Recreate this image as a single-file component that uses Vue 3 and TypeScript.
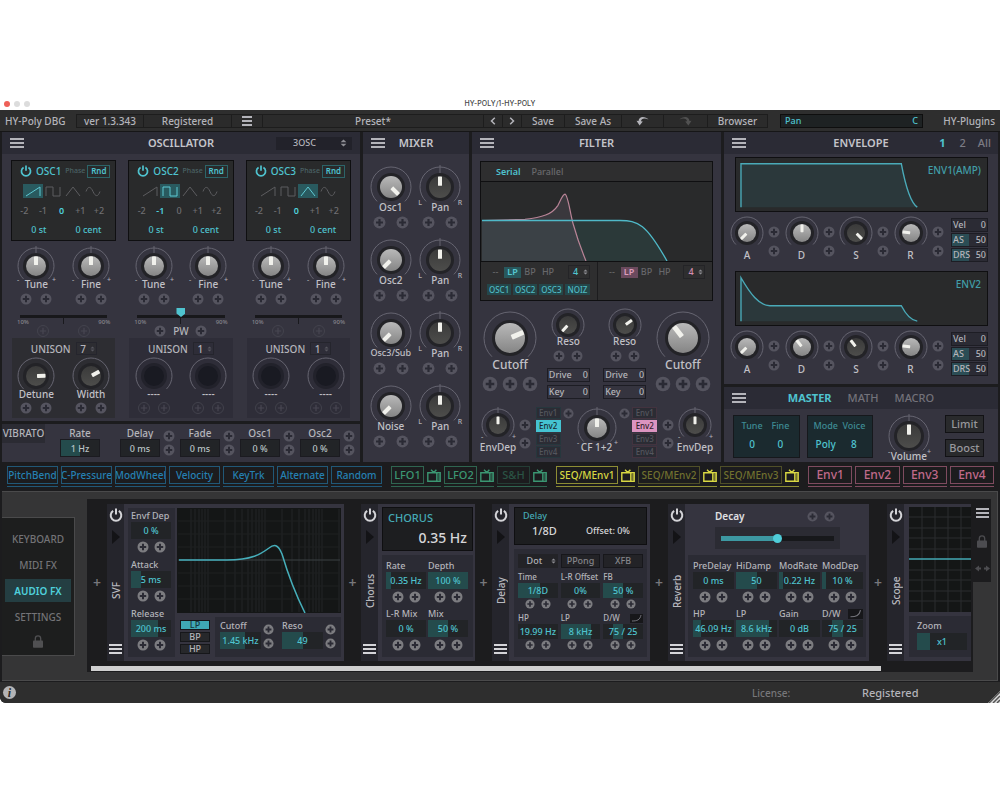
<script setup lang="ts">
import { h, ref } from 'vue'

interface KnobProps {
  radius: number
  body: number
  angle?: number
  label?: string
  dark?: boolean
  off?: boolean
  tick?: boolean
  marks?: string
  low?: boolean
  size?: string
  name?: string
}

const polar = (r: number, deg: number) => {
  const a = (deg * Math.PI) / 180
  return `${(Math.sin(a) * r).toFixed(2)} ${(-Math.cos(a) * r).toFixed(2)}`
}

const Knob = (p: KnobProps) => {
  const s = p.radius + 2
  const b = p.body
  const kids = [
    h('path', { d: `M${polar(p.radius, -136)}A${p.radius} ${p.radius} 0 1 1 ${polar(p.radius, 136)}`, fill: 'none', stroke: '#666571', 'stroke-width': 1 }),
  ]
  if (p.tick) kids.push(h('path', { d: `M0 ${-s}V${-b - 2}`, stroke: '#666571' }))
  kids.push(h('circle', { r: b + 3, fill: p.off ? '#22222b' : '#232327' }))
  if (!p.off) {
    const w = b > 13 ? 5 : b > 9 ? 4 : 3
    kids.push(h('circle', { r: b, fill: p.dark ? 'url(#cap-dark)' : 'url(#cap-light)' }))
    kids.push(h('rect', { x: -w / 2, y: -b + 0.5, width: w, height: b * 0.85, rx: 0.6, fill: '#f1f1ec', transform: `rotate(${p.angle ?? 0})` }))
  } else {
    kids.push(h('circle', { r: b, fill: '#191a22' }))
  }
  if (p.marks) {
    kids.push(h('text', { x: -p.radius, y: p.radius - 2, class: 'mark' }, p.marks[0]))
    kids.push(h('text', { x: p.radius, y: p.radius - 2, class: 'mark' }, p.marks[1]))
  }
  return h('label', { class: ['knob', p.size, { low: p.low }] }, [
    h('svg', { width: s * 2, height: s * 2, viewBox: `${-s} ${-s} ${s * 2} ${s * 2}` }, kids),
    h('input', { type: 'range', min: -136, max: 136, value: p.angle ?? 0, disabled: p.off, 'aria-label': p.label || p.name }),
    p.label ? h('span', p.label) : null,
  ])
}

const Plus = (p: { size?: number; ghost?: boolean }) =>
  h('button', { class: ['plus', { ghost: p.ghost }], type: 'button', 'aria-label': 'Add modulation' }, [
    h('svg', { width: p.size ?? 12, height: p.size ?? 12, viewBox: '0 0 12 12' }, [
      h('circle', { cx: 6, cy: 6, r: 5.5, class: 'disc' }),
      h('path', { d: 'M6 2.8V9.2M2.8 6H9.2', class: 'cross' }),
    ]),
  ])

const Burger = (p: { size?: number }) =>
  h('button', { class: 'burger', type: 'button', 'aria-label': 'Menu' }, [
    h('svg', { width: p.size ?? 14, height: 10, viewBox: '0 0 14 10', preserveAspectRatio: 'none' }, [
      h('path', { d: 'M0 1H14M0 5H14M0 9H14', stroke: 'currentColor', 'stroke-width': 1.8 }),
    ]),
  ])

const Power = (p: { size: number }) =>
  h('button', { class: 'power', type: 'button', 'aria-label': 'Power' }, [
    h('svg', { width: p.size, height: p.size, viewBox: '0 0 14 14' }, [
      h('path', { d: 'M4.2 2.9A5.3 5.3 0 1 0 9.8 2.9M7 0.6V6.6', fill: 'none', stroke: 'currentColor', 'stroke-width': 2 }),
    ]),
  ])

const Steps = () =>
  h('svg', { class: 'steps', width: 7, height: 8, viewBox: '0 0 7 8', 'aria-hidden': 'true' }, [
    h('path', { d: 'M0.6 3.2L3.5 0.4L6.4 3.2ZM0.6 4.8L3.5 7.6L6.4 4.8Z', fill: 'currentColor' }),
  ])

const Lock = () =>
  h('svg', { class: 'lock', width: 10, height: 13, viewBox: '0 0 10 13', 'aria-hidden': 'true' }, [
    h('path', { d: 'M2.3 6V3.6A2.7 2.7 0 0 1 7.7 3.6V6', fill: 'none', stroke: 'currentColor', 'stroke-width': 1.3 }),
    h('rect', { x: 0, y: 5.5, width: 10, height: 7.2, rx: 0.8, fill: 'currentColor' }),
  ])

const Tv = () =>
  h('button', { class: 'tv', type: 'button', 'aria-label': 'Show monitor' }, [
    h('svg', { width: 14, height: 13, viewBox: '0 0 14 13' }, [
      h('path', { d: 'M0.8 3.8H13.2V12.2H0.8ZM9.8 4V12M4 0.8L6.8 3.6L9.4 0.8', fill: 'none', stroke: 'currentColor', 'stroke-width': 1.4 }),
      h('path', { d: 'M10.6 6H13M10.6 8H13M10.6 10H13', stroke: 'currentColor', 'stroke-width': 0.9 }),
    ]),
  ])

const fill = (from: number, to: number) => ({ '--from': `${from}%`, '--to': `${to}%` })

const waves = [
  { name: 'Saw', d: 'M1 10L15 1V10' },
  { name: 'Square', d: 'M1 10V1H8V10H15V1' },
  { name: 'Triangle', d: 'M1 10L8 1L15 10' },
  { name: 'Sine', d: 'M1 5.5C3 0 5.5 0 8 5.5S13 11 15 5.5' },
]
const octaves = ['-2', '-1', '0', '+1', '+2']

const oscs = ref([
  { name: 'OSC1', wave: 0, octave: 2, pw: false, unison: '7', wide: true },
  { name: 'OSC2', wave: 1, octave: 1, pw: true, unison: '1', wide: false },
  { name: 'OSC3', wave: 2, octave: 2, pw: false, unison: '1', wide: false },
])

const vibrato = [
  { label: 'Rate', value: '1 Hz', to: 50, mod: false },
  { label: 'Delay', value: '0 ms', to: 0, mod: true },
  { label: 'Fade', value: '0 ms', to: 0, mod: true },
  { label: 'Osc1', value: '0 %', to: 0, mod: true },
  { label: 'Osc2', value: '0 %', to: 0, mod: true },
]

const mixer = [
  { label: 'Osc1', angle: 135, size: '' },
  { label: 'Osc2', angle: -135, size: '' },
  { label: 'Osc3/Sub', angle: -135, size: 'small' },
  { label: 'Noise', angle: -135, size: '' },
]

const envs = [
  {
    name: 'ENV1(AMP)',
    line: 'M5 51V6H166C170 28 175 46 182 51',
    knobs: [['A', -135], ['D', 0], ['S', 135], ['R', -82]] as [string, number][],
  },
  {
    name: 'ENV2',
    line: 'M5 51V6C14 22 23 35 34 35H166C170 43 175 50 182 51',
    knobs: [['A', -135], ['D', -38], ['S', -38], ['R', -82]] as [string, number][],
  },
]
const envValues = [
  { label: 'Vel', value: '0', to: 0 },
  { label: 'AS', value: '50', to: 50 },
  { label: 'DRS', value: '50', to: 50 },
]
const envSlots = ['Env1', 'Env2', 'Env3', 'Env4']
const envPick = ref('Env2')

const sources = [
  { kind: 'midi', items: ['PitchBend', 'C-Pressure', 'ModWheel', 'Velocity', 'KeyTrk', 'Alternate', 'Random'], dim: [] as string[], tv: false },
  { kind: 'lfo', items: ['LFO1', 'LFO2', 'S&H'], dim: ['S&H'], tv: true },
  { kind: 'seq', items: ['SEQ/MEnv1', 'SEQ/MEnv2', 'SEQ/MEnv3'], dim: ['SEQ/MEnv2', 'SEQ/MEnv3'], tv: true },
  { kind: 'env', items: ['Env1', 'Env2', 'Env3', 'Env4'], dim: [] as string[], tv: false },
]

const pages = ['KEYBOARD', 'MIDI FX', 'AUDIO FX', 'SETTINGS']
const page = ref('AUDIO FX')

interface Param { label: string; value: string; from?: number; to: number; curve?: boolean }
const svf: Param[] = [
  { label: 'Envf Dep', value: '0 %', to: 0 },
  { label: 'Attack', value: '5 ms', to: 24 },
  { label: 'Release', value: '200 ms', to: 68 },
]
const svfTone: Param[] = [
  { label: 'Cutoff', value: '1.45 kHz', to: 60 },
  { label: 'Reso', value: '49', to: 50 },
]
const chorus: Param[] = [
  { label: 'Rate', value: '0.35 Hz', to: 12 },
  { label: 'Depth', value: '100 %', to: 100 },
  { label: 'L-R Mix', value: '0 %', to: 0 },
  { label: 'Mix', value: '50 %', to: 50 },
]
const delay: Param[] = [
  { label: 'Time', value: '1/8D', to: 55 },
  { label: 'L-R Offset', value: '0%', to: 0 },
  { label: 'FB', value: '50 %', to: 50 },
  { label: 'HP', value: '19.99 Hz', to: 0 },
  { label: 'LP', value: '8 kHz', to: 76 },
  { label: 'D/W', value: '75 / 25', from: 25, to: 50, curve: true },
]
const reverb: Param[] = [
  { label: 'PreDelay', value: '0 ms', to: 0 },
  { label: 'HiDamp', value: '50', to: 50 },
  { label: 'ModRate', value: '0.22 Hz', to: 10 },
  { label: 'ModDep', value: '10 %', to: 10 },
  { label: 'HP', value: '46.09 Hz', to: 20 },
  { label: 'LP', value: '8.6 kHz', to: 80 },
  { label: 'Gain', value: '0 dB', to: 0 },
  { label: 'D/W', value: '75 / 25', from: 25, to: 50, curve: true },
]

const logLines: number[] = []
for (const start of [-26, 31, 88, 145]) {
  for (let i = 1; i < 10; i++) {
    const x = Math.round(start + 57 * Math.log10(i))
    if (x > 12 && x < 163) logLines.push(x)
  }
}
</script>

<template>
  <main class="window">
    <svg class="defs" width="0" height="0" aria-hidden="true">
      <defs>
        <linearGradient id="cap-light" x1="0" y1="0" x2="0" y2="1">
          <stop offset="0" stop-color="#b9b9b9" />
          <stop offset="1" stop-color="#858585" />
        </linearGradient>
        <linearGradient id="cap-dark" x1="0" y1="0" x2="0" y2="1">
          <stop offset="0" stop-color="#3a3a3a" />
          <stop offset="1" stop-color="#4d4d4b" />
        </linearGradient>
      </defs>
    </svg>

    <header class="titlebar">
      <div class="lights"><i class="close"></i><i></i><i></i></div>
      <h1>HY-POLY/1-HY-POLY</h1>
      <span></span>
    </header>

    <div class="app">
      <nav class="topbar">
        <strong class="brand">HY-Poly DBG</strong>
        <button type="button">ver 1.3.343</button>
        <button type="button">Registered</button>
        <Burger :size="10" />
        <button type="button">Preset*</button>
        <button type="button" aria-label="Previous preset"><svg width="6" height="8" viewBox="0 0 6 8"><path d="M4.8 0.8L1.5 4L4.8 7.2" fill="none" stroke="currentColor" stroke-width="1.5" /></svg></button>
        <button type="button" aria-label="Next preset"><svg width="6" height="8" viewBox="0 0 6 8"><path d="M1.2 0.8L4.5 4L1.2 7.2" fill="none" stroke="currentColor" stroke-width="1.5" /></svg></button>
        <button type="button">Save</button>
        <button type="button">Save As</button>
        <button type="button" aria-label="Undo"><svg width="13" height="10" viewBox="0 0 13 10"><path d="M12.5 3.5C10 0.5 3 -1 2.5 5L0.5 4.8L3.6 9.6L6.8 5.5L5 5.3C5 2.5 8.5 1.5 12.5 3.5Z" fill="currentColor" /></svg></button>
        <button type="button" class="faded" aria-label="Redo"><svg width="13" height="10" viewBox="0 0 13 10"><path d="M0.5 3.5C3 0.5 10 -1 10.5 5L12.5 4.8L9.4 9.6L6.2 5.5L8 5.3C8 2.5 4.5 1.5 0.5 3.5Z" fill="currentColor" /></svg></button>
        <button type="button">Browser</button>
        <span></span>
        <output class="readout"><span>Pan</span><span>C</span></output>
        <strong class="vendor">HY-Plugins</strong>
      </nav>

      <div class="synth">
        <div class="stack">
          <section class="panel">
            <header class="head">
              <Burger />
              <h2>OSCILLATOR</h2>
              <label class="sel mode"><select aria-label="Oscillator mode"><option>3OSC</option></select><Steps /></label>
            </header>
            <div class="oscs">
              <article v-for="o in oscs" :key="o.name" class="osc">
                <div class="screen osc-screen">
                  <div class="osc-top">
                    <Power :size="12" />
                    <b>{{ o.name }}</b>
                    <small>Phase</small>
                    <button type="button" class="rnd">Rnd</button>
                  </div>
                  <div class="waves">
                    <button v-for="(w, i) in waves" :key="w.name" type="button" :class="{ on: i === o.wave }" :aria-label="w.name" @click="o.wave = i">
                      <svg width="16" height="11" viewBox="0 0 16 11"><path :d="w.d" fill="none" stroke="currentColor" /></svg>
                    </button>
                  </div>
                  <div class="octaves">
                    <button v-for="(n, i) in octaves" :key="n" type="button" :class="{ on: i === o.octave }" @click="o.octave = i">{{ n }}</button>
                  </div>
                  <div class="tuning"><span>0 st</span><span>0 cent</span></div>
                </div>
                <div class="pair tunes">
                  <div v-for="n in ['Tune', 'Fine']" :key="n" class="cell">
                    <Knob :radius="18" :body="10" :label="n" :tick="true" marks="-+" />
                    <div class="mods"><Plus /><Plus /></div>
                  </div>
                </div>
                <div class="width" :class="{ live: o.pw }">
                  <input type="range" min="10" max="90" value="50" :disabled="!o.pw" :aria-label="o.name + ' pulse width'" />
                  <div class="scale"><span>10%</span><i></i><span>90%</span></div>
                  <div class="pw"><Plus :ghost="!o.pw" /><span>{{ o.pw ? 'PW' : '' }}</span><Plus :ghost="!o.pw" /></div>
                </div>
                <div class="unison" :class="{ live: o.wide }">
                  <label class="sel count"><span>UNISON</span><select><option>{{ o.unison }}</option></select><Steps /></label>
                  <div class="pair">
                    <div class="cell">
                      <Knob :radius="18" :body="10" :angle="88" :dark="true" :off="!o.wide" :label="o.wide ? 'Detune' : '----'" />
                      <div class="mods"><Plus :ghost="!o.wide" /><Plus :ghost="!o.wide" /></div>
                    </div>
                    <div class="cell">
                      <Knob :radius="18" :body="10" :angle="62" :dark="true" :off="!o.wide" :label="o.wide ? 'Width' : '----'" />
                      <div class="mods"><Plus :ghost="!o.wide" /><Plus :ghost="!o.wide" /></div>
                    </div>
                  </div>
                </div>
              </article>
            </div>
          </section>

          <section class="panel vibrato">
            <h2>VIBRATO</h2>
            <div v-for="v in vibrato" :key="v.label" class="vib">
              <label><span>{{ v.label }}</span><input class="val boxed" type="text" :value="v.value" :style="fill(0, v.to)" /></label>
              <div v-if="v.mod" class="mods tall"><Plus /><Plus /></div>
            </div>
          </section>
        </div>

        <section class="panel">
          <header class="head"><Burger /><h2>MIXER</h2></header>
          <div class="mixer">
            <template v-for="m in mixer" :key="m.label">
              <div class="cell">
                <Knob :radius="20" :body="11" :angle="m.angle" :label="m.label" :size="m.size" />
                <div class="mods"><Plus :size="13" /><Plus :size="13" /></div>
              </div>
              <div class="cell">
                <Knob :radius="20" :body="11" :dark="true" label="Pan" :tick="true" marks="LR" />
                <div class="mods"><Plus :size="13" /><Plus :size="13" /></div>
              </div>
            </template>
          </div>
        </section>

        <section class="panel">
          <header class="head"><Burger /><h2>FILTER</h2></header>
          <div class="filter">
            <div class="screen filter-screen">
              <div class="routing"><button type="button" class="on">Serial</button><button type="button">Parallel</button></div>
              <svg class="curve" viewBox="0 0 231 78" preserveAspectRatio="none" aria-hidden="true">
                <path d="M1 38H139C157 38 165 41 186 78H1Z" fill="#2b3939" />
                <path d="M1 38L44 37C61 35 71 32 77 23C81 15 82 12 84 12C87 13 89 30 92 41C96 55 100 66 105 78H1Z" fill="#584f5b" fill-opacity=".38" />
                <path d="M1 38L44 37C61 35 71 32 77 23C81 15 82 12 84 12C87 13 89 30 92 41C96 55 100 66 105 78" fill="none" stroke="#b98497" stroke-width="1.2" />
                <path d="M1 38H139C157 38 165 41 186 78" fill="none" stroke="#4fb9c8" stroke-width="1.3" />
              </svg>
              <div class="types">
                <div>
                  <div class="type"><button type="button">--</button><button type="button" class="on">LP</button><button type="button">BP</button><button type="button">HP</button><label class="sel poles"><select aria-label="Filter 1 poles"><option>4</option></select><Steps /></label></div>
                  <div class="route"><button v-for="r in ['OSC1', 'OSC2', 'OSC3', 'NOIZ']" :key="r" type="button">{{ r }}</button></div>
                </div>
                <div class="rose">
                  <div class="type"><button type="button">--</button><button type="button" class="on">LP</button><button type="button">BP</button><button type="button">HP</button><label class="sel poles"><select aria-label="Filter 2 poles"><option>4</option></select><Steps /></label></div>
                </div>
              </div>
            </div>
            <div class="filters">
              <div class="cell">
                <Knob :radius="26" :body="15" :angle="67" label="Cutoff" size="large" />
                <div class="mods"><Plus :size="16" /><Plus :size="16" /><Plus :size="16" /></div>
              </div>
              <div v-for="(a, i) in [-138, 55]" :key="i" class="cell reso">
                <Knob :radius="16" :body="9" :angle="a" :dark="true" label="Reso" />
                <div class="mods"><Plus /><Plus /></div>
                <label class="inline"><span>Drive</span><input type="text" value="0" /></label>
                <label class="inline"><span>Key</span><input type="text" value="0" /></label>
              </div>
              <div class="cell">
                <Knob :radius="26" :body="15" :angle="-38" label="Cutoff" size="large" />
                <div class="mods"><Plus :size="16" /><Plus :size="16" /><Plus :size="16" /></div>
              </div>
            </div>
            <div class="depths">
              <Knob :radius="16" :body="9" :dark="true" :tick="true" marks="-+" label="EnvDep" :low="true" />
              <div class="mods tall"><Plus /><Plus /></div>
              <div class="slots"><button v-for="e in envSlots" :key="e" type="button" :class="{ on: e === envPick }" @click="envPick = e">{{ e }}</button></div>
              <div class="mods tall"><Plus :size="11" /></div>
              <Knob :radius="19" :body="10" :tick="true" marks="-+" label="CF 1+2" />
              <div class="mods tall"><Plus :size="11" /></div>
              <div class="slots rose"><button v-for="e in envSlots" :key="e" type="button" :class="{ on: e === envPick }" @click="envPick = e">{{ e }}</button></div>
              <div class="mods tall"><Plus /><Plus /></div>
              <Knob :radius="16" :body="9" :dark="true" :tick="true" marks="-+" label="EnvDep" :low="true" />
            </div>
          </div>
        </section>

        <div class="stack">
          <section class="panel">
            <header class="head">
              <Burger />
              <h2>ENVELOPE</h2>
              <div class="pager"><button type="button" class="on">1</button><button type="button">2</button><button type="button">All</button></div>
            </header>
            <div class="envs">
              <article v-for="(e, n) in envs" :key="e.name">
                <div class="screen env-screen">
                  <svg viewBox="0 0 252 55" preserveAspectRatio="none" aria-hidden="true">
                    <path :d="e.line + 'Z'" fill="#2b383b" />
                    <path :d="e.line" fill="none" stroke="#4aaab8" stroke-width="1.4" />
                  </svg>
                  <span>{{ e.name }}</span>
                </div>
                <div class="adsr">
                  <div v-for="k in e.knobs" :key="k[0]" class="stage">
                    <Knob :radius="16" :body="9" :angle="k[1]" :dark="k[0] === 'S'" :label="k[0]" :low="true" />
                    <div class="mods tall"><Plus /><Plus /></div>
                  </div>
                  <div class="env-values">
                    <label v-for="v in envValues" :key="v.label" class="inline" :style="fill(0, v.to)"><span>{{ v.label }}</span><input type="text" :value="v.value" :aria-label="'Envelope ' + (n + 1) + ' ' + v.label" /></label>
                  </div>
                </div>
              </article>
            </div>
          </section>
          <section class="panel">
            <header class="head">
              <Burger />
              <div class="tabs"><button type="button" class="on">MASTER</button><button type="button">MATH</button><button type="button">MACRO</button></div>
            </header>
            <div class="master">
              <dl class="lcd"><div><dt>Tune</dt><dd>0</dd></div><div><dt>Fine</dt><dd>0</dd></div></dl>
              <dl class="lcd"><div><dt>Mode</dt><dd>Poly</dd></div><div><dt>Voice</dt><dd>8</dd></div></dl>
              <Knob :radius="20" :body="12" :dark="true" :tick="true" marks="-+" label="Volume" />
              <div class="switches"><button type="button">Limit</button><button type="button">Boost</button></div>
            </div>
          </section>
        </div>
      </div>

      <div class="sources">
        <div v-for="g in sources" :key="g.kind" class="group" :class="g.kind">
          <div v-for="s in g.items" :key="s" class="source">
            <button type="button" :class="{ dim: g.dim.includes(s) }">{{ s }}</button>
            <Tv v-if="g.tv" />
          </div>
        </div>
      </div>

      <div class="lower">
        <nav class="pages">
          <button v-for="p in pages" :key="p" type="button" :class="{ on: p === page }" @click="page = p">{{ p }}</button>
          <Lock />
        </nav>

        <div class="rack-wrap">
          <div class="rack">
            <div class="modules">
              <button type="button" class="insert first" aria-label="Insert effect">+</button>

              <section class="module svf">
                <div class="rail"><Power :size="14" /><i></i><h3>SVF</h3><Burger :size="13" /></div>
                <div class="svf-body">
                  <div class="group-box column">
                    <div v-for="p in svf" :key="p.label" class="param">
                      <label><span>{{ p.label }}</span><input class="val" type="text" :value="p.value" :style="fill(0, p.to)" /></label>
                      <div class="mods"><Plus /><Plus /></div>
                    </div>
                  </div>
                  <div class="svf-right">
                    <svg class="plot" viewBox="0 0 164 105" preserveAspectRatio="none" aria-hidden="true">
                      <path v-for="x in logLines" :key="x" :d="`M${x} 1V104`" stroke="#232526" />
                      <path d="M1 13H163M1 26H163M1 39H163M1 65H163M1 78H163M1 91H163" stroke="#1e2121" />
                      <path d="M1 52H163" stroke="#3b4142" />
                      <path d="M2 52H50C75 52 84 46 92 40C97 36 101 36 105 46C110 63 119 87 128 105" fill="none" stroke="#46aeba" stroke-width="1.5" />
                    </svg>
                    <div class="svf-controls">
                      <div class="modes"><button type="button" class="on">LP</button><button type="button">BP</button><button type="button">HP</button></div>
                      <div class="group-box tone">
                        <div v-for="p in svfTone" :key="p.label" class="tone-param">
                          <label><span>{{ p.label }}</span><input class="val" type="text" :value="p.value" :style="fill(0, p.to)" /></label>
                          <div class="mods tall"><Plus :size="11" /><Plus :size="11" /></div>
                        </div>
                      </div>
                    </div>
                  </div>
                </div>
              </section>

              <button type="button" class="insert" aria-label="Insert effect">+</button>

              <section class="module chorus">
                <div class="rail"><Power :size="14" /><i></i><h3>Chorus</h3><Burger :size="13" /></div>
                <div class="fx-body">
                  <div class="screen chorus-screen"><b>CHORUS</b><span>0.35 Hz</span></div>
                  <div class="group-box params two">
                    <div v-for="p in chorus" :key="p.label" class="param">
                      <label><span>{{ p.label }}</span><input class="val" type="text" :value="p.value" :style="fill(0, p.to)" /></label>
                      <div class="mods"><Plus /><Plus /></div>
                    </div>
                  </div>
                </div>
              </section>

              <button type="button" class="insert" aria-label="Insert effect">+</button>

              <section class="module delay">
                <div class="rail"><Power :size="14" /><i></i><h3>Delay</h3><Burger :size="13" /></div>
                <div class="fx-body">
                  <div class="screen delay-screen"><b>Delay</b><div><strong>1/8D</strong><span>Offset: 0%</span></div></div>
                  <div class="group-box params three">
                    <label class="sel dot"><select aria-label="Note type"><option>Dot</option></select><Steps /></label>
                    <button type="button" class="toggle">PPong</button>
                    <button type="button" class="toggle">XFB</button>
                    <div v-for="p in delay" :key="p.label" class="param compact">
                      <label><span>{{ p.label }}<svg v-if="p.curve" class="dw" width="13" height="9" viewBox="0 0 13 9" aria-hidden="true"><path d="M2 7C7 7 10 6 11 1" fill="none" stroke="#73737a" /></svg></span><input class="val" type="text" :value="p.value" :style="fill(p.from ?? 0, p.to)" /></label>
                      <div class="mods"><Plus :size="10" /><Plus :size="10" /></div>
                    </div>
                  </div>
                </div>
              </section>

              <button type="button" class="insert wide" aria-label="Insert effect">+</button>

              <section class="module reverb">
                <div class="rail"><Power :size="14" /><i></i><h3>Reverb</h3><Burger :size="13" /></div>
                <div class="fx-body">
                  <div class="decay">
                    <div class="decay-top"><label for="decay">Decay</label><div class="mods"><Plus :size="11" /><Plus :size="11" /></div></div>
                    <div class="decay-track"><input id="decay" type="range" min="0" max="100" value="50" /></div>
                  </div>
                  <div class="group-box params four">
                    <div v-for="p in reverb" :key="p.label" class="param">
                      <label><span>{{ p.label }}<svg v-if="p.curve" class="dw" width="15" height="10" viewBox="0 0 13 9" aria-hidden="true"><path d="M2 7C7 7 10 6 11 1" fill="none" stroke="#73737a" /></svg></span><input class="val" type="text" :value="p.value" :style="fill(p.from ?? 0, p.to)" /></label>
                      <div class="mods"><Plus /><Plus /></div>
                    </div>
                  </div>
                </div>
              </section>

              <button type="button" class="insert wide" aria-label="Insert effect">+</button>

              <section class="module scope">
                <div class="rail"><Power :size="14" /><i></i><h3>Scope</h3><Burger :size="13" /></div>
                <div class="scope-body">
                  <svg class="plot" viewBox="0 0 78 105" preserveAspectRatio="none" aria-hidden="true">
                    <path d="M13 0V105M26 0V105M39 0V105M52 0V105M65 0V105M0 10H78M0 21H78M0 31H78M0 42H78M0 63H78M0 73H78M0 84H78M0 94H78" stroke="#2b2d2e" />
                    <path d="M0 52H78" stroke="#43aab4" stroke-width="1.5" />
                  </svg>
                  <label class="group-box zoom"><span>Zoom</span><input class="val" type="text" value="x1" :style="fill(0, 26)" /></label>
                </div>
              </section>
            </div>
            <div class="scroll"><i></i></div>
          </div>
          <aside class="strip">
            <Burger :size="13" />
            <Lock />
            <svg width="15" height="7" viewBox="0 0 15 7" aria-hidden="true"><path d="M0 3.5L4 0.5V2.5H6V4.5H4V6.5ZM15 3.5L11 0.5V2.5H9V4.5H11V6.5Z" fill="#4c4c50" /></svg>
          </aside>
        </div>
      </div>

      <footer class="status">
        <button type="button" class="info" aria-label="Information">i</button>
        <span class="lic">License:</span>
        <strong>Registered</strong>
        <svg class="grip" width="12" height="13" viewBox="0 0 12 13" aria-hidden="true"><path d="M12 1L0 13H12Z" fill="#ddd" /><path d="M12 2L1 13M12 6L5 13M12 10L9 13" stroke="#555" stroke-width="1.5" /></svg>
      </footer>
    </div>
  </main>
</template>

<style>
body {
  margin: 0;
  background: #fff;
}
.window button,
.window input,
.window select {
  margin: 0;
  padding: 0;
  border: 0;
  border-radius: 0;
  background: none;
  color: inherit;
  font: inherit;
  min-width: 0;
}
.window button {
  display: flex;
  align-items: center;
  justify-content: center;
  white-space: nowrap;
  cursor: pointer;
}
.window svg {
  display: block;
  flex: none;
}
.knob {
  position: relative;
  display: flex;
  flex-direction: column;
  align-items: center;
  white-space: nowrap;
}
.knob svg {
  overflow: visible;
}
.window .knob input {
  position: absolute;
  inset: 0;
  width: 100%;
  height: 100%;
  opacity: 0;
}
.knob span {
  margin: -8px -8px 0;
  font-size: 10px;
  line-height: 12px;
  color: #c1c0c6;
}
.knob.low span {
  margin-top: -2px;
}
.knob.small span {
  font-size: 9px;
}
.knob.large span {
  margin-top: -9px;
  font-size: 12px;
  line-height: 15px;
}
.knob .mark {
  font-size: 7px;
  text-anchor: middle;
  fill: #b0afb6;
}
.plus .disc {
  fill: #55545f;
}
.plus .cross {
  stroke: #2a2a34;
  stroke-width: 2;
}
.plus.ghost .disc {
  fill: none;
  stroke: #484752;
  stroke-width: 0.8;
}
.plus.ghost .cross {
  stroke: #484752;
  stroke-width: 1.2;
}
.lower .plus .disc {
  fill: #7c7c80;
}
.lower .decay .plus .disc {
  fill: #55545f;
}
.burger {
  color: #c4c4c8;
}
.steps,
.lock {
  color: #8d8d93;
}
</style>

<style scoped>
.window {
  padding-top: 97px;
  font-family: 'Noto Sans', 'Open Sans', sans-serif;
  font-size: 10px;
  font-weight: 500;
  line-height: 12px;
  color: #b4b4ba;
}
.defs {
  position: absolute;
}
h1,
h2,
h3,
dl,
dd {
  margin: 0;
  font-weight: 500;
}
.titlebar {
  display: grid;
  grid-template-columns: 1fr auto 1fr;
  align-items: center;
  height: 13px;
}
.lights {
  display: flex;
  gap: 4px;
  padding-left: 4px;
}
.lights i {
  width: 6px;
  height: 6px;
  border-radius: 50%;
  background: #dcdcdc;
}
.lights .close {
  background: #ee6058;
}
.titlebar h1 {
  font-family: Inter, sans-serif;
  font-size: 7px;
  line-height: 9px;
  color: #444;
}
.app {
  background: #1c1c1e;
  border-radius: 0 0 0 6px;
  overflow: hidden;
}

/* top bar */
.topbar {
  display: grid;
  grid-template-columns: 76fr 68fr 88fr 31fr 221fr 19fr 19fr 43fr 57fr 42fr 44fr 60fr 12fr 143fr 77fr;
  align-items: center;
  height: 21px;
  border-bottom: 1px solid #161617;
  background: #2e2e2e;
}
.topbar > * {
  min-width: 0;
  white-space: nowrap;
}
.topbar > button {
  height: 14px;
  border: 1px solid #1d1d1d;
  border-left-width: 0;
  background: #2b2b2b;
}
.topbar > button:nth-child(2) {
  border-left-width: 1px;
}
.topbar .faded {
  color: #515151;
}
.brand,
.vendor {
  padding-left: 5px;
  font-weight: 500;
}
.vendor {
  padding: 0 5px;
  text-align: right;
}
.readout {
  display: flex;
  justify-content: space-between;
  padding: 0 4px;
  border: 1px solid #0e0e0e;
  background: #1e2223;
  color: #4fc3cf;
  font-size: 9px;
}

/* synth panels */
.synth {
  display: grid;
  grid-template-columns: 358fr 106fr 249fr 274fr;
  gap: 3px;
  padding: 0 2px;
  min-height: 330px;
}
.synth > * {
  min-width: 0;
}
.stack {
  display: flex;
  flex-direction: column;
  gap: 3px;
}
.panel {
  background: #35343f;
}
.stack > .panel:last-child {
  flex: 1;
}
.head {
  display: grid;
  grid-template-columns: 1fr auto 1fr;
  align-items: center;
  height: 22px;
  padding: 0 8px;
  background: #2b2b35;
}
.head > :first-child {
  justify-self: start;
}
.head h2 {
  font-size: 11px;
  font-weight: 600;
  line-height: 16px;
  color: #c4c4ca;
}
.screen {
  border: 1px solid #0f0f11;
  background: #292a2b;
}
.sel {
  display: grid;
  grid-template-columns: 1fr auto;
  align-items: center;
}
.sel select {
  appearance: none;
  grid-area: 1 / 1 / 2 / 3;
  width: 100%;
  text-align-last: center;
}
.sel .steps {
  grid-area: 1 / 2;
}
.mode {
  justify-self: end;
  width: 76px;
  height: 13px;
  padding-right: 5px;
  box-sizing: border-box;
  background: #22222a;
  font-size: 9px;
}
.mode select {
  padding-right: 14px;
}

.oscs {
  display: grid;
  grid-template-columns: repeat(3, 1fr);
  gap: 12px;
  padding: 6px 9px 3px;
}
.osc-screen {
  display: grid;
  grid-auto-rows: 14px;
  gap: 6px;
  padding: 3px 5px 2px;
  color: #6f6f72;
  font-size: 9px;
}
.osc-top {
  display: flex;
  align-items: center;
  padding-left: 3px;
  color: #4fc3cf;
}
.osc-top b {
  margin-left: 4px;
  font-size: 10px;
  font-weight: 500;
}
.osc-top small {
  margin: 0 2px 0 auto;
  font-size: 7px;
  color: #4b6366;
}
.rnd {
  width: 23px;
  height: 13px;
  border: 1px solid #2c6468 !important;
  font-size: 8px !important;
  font-weight: 600 !important;
}
.waves {
  display: grid;
  grid-template-columns: repeat(4, 20px);
  justify-content: start;
  padding-left: 6px;
}
.waves .on {
  background: #295a5f;
  color: #5fc9d4;
}
.waves button {
  color: #5d5d60;
}
.octaves {
  display: grid;
  grid-template-columns: repeat(5, 1fr);
  margin: 0 2px 0 -2px;
}
.octaves .on {
  color: #4fd0dc;
  font-weight: 600;
}
.tuning {
  display: grid;
  grid-template-columns: 1fr 1fr;
  margin: 0 -3px;
  color: #4fc3cf;
  text-align: center;
}
.pair {
  display: grid;
  grid-template-columns: 1fr 1fr;
  margin: 0 -3px;
}
.tunes {
  margin: 5px -2px 0;
}
.cell {
  display: flex;
  flex-direction: column;
  align-items: center;
}
.mods {
  display: flex;
  gap: 8px;
  margin-top: 3px;
}
.mods.tall {
  flex-direction: column;
  gap: 3px;
  margin: 0;
}
.width {
  display: grid;
  margin-top: 10px;
  padding: 0 9px;
}
.width input {
  appearance: none;
  width: 100%;
  height: 3px;
  background: #18181b;
}
.width input::-webkit-slider-thumb {
  appearance: none;
  width: 9px;
  height: 9px;
  margin-top: -8px;
  background: transparent;
  clip-path: polygon(0 0, 100% 0, 100% 60%, 50% 100%, 0 60%);
}
.live input::-webkit-slider-thumb {
  background: #4fc3cf;
}
.scale {
  display: flex;
  justify-content: space-between;
  margin: 0 -3px;
  height: 7px;
  font-size: 6px;
  line-height: 9px;
  color: #85848c;
}
.scale i {
  width: 1px;
  height: 6px;
  background: #19191d;
}
.pw {
  display: grid;
  grid-template-columns: 12px 29px 12px;
  justify-content: center;
  text-align: center;
  height: 12px;
}
.unison {
  margin: 1px 1px 0;
  padding: 4px 0;
  background: #2e2d38;
}
.unison.live {
  background: #2d2d32;
}
.count {
  grid-template-columns: auto 21px;
  justify-content: center;
  gap: 5px;
  height: 13px;
  margin-bottom: 1px;
}
.count select {
  grid-area: 1 / 2;
  box-sizing: border-box;
  height: 13px;
  padding-right: 6px;
  border: 1px solid #25252d;
}
.count .steps {
  grid-area: 1 / 2;
  justify-self: end;
  width: 5px;
  margin-right: 2px;
  color: #56565e;
}
.unison .mods {
  margin-top: 2px;
}
.vibrato {
  display: grid;
  grid-template-columns: 58fr repeat(5, 60fr);
  align-items: start;
}
.vibrato h2 {
  width: 43px;
  line-height: 19px;
  background: #2b2b33;
  text-align: center;
  font-size: 10px;
}
.vib {
  display: flex;
  gap: 3px;
  align-items: flex-end;
  padding-top: 3px;
}
.vib label {
  display: grid;
  width: 40px;
  text-align: center;
}
.vib label span {
  line-height: 12px;
}
.vib .mods {
  padding-bottom: 1px;
  gap: 2px;
}
.val {
  width: 100%;
  height: 17px;
  text-align: center;
  background: linear-gradient(90deg, transparent var(--from), #244b4c var(--from) var(--to), transparent var(--to)) #222427 !important;
}
.boxed {
  box-sizing: border-box;
  height: 18px;
  border: 1px solid #1b1b20 !important;
  color: #b9c3c5 !important;
  font-size: 9px !important;
}

.mixer {
  display: grid;
  grid-template-columns: 1fr 1fr;
  grid-auto-rows: 73px;
  padding: 11px 4px 0 3px;
}
.mixer .mods {
  gap: 10px;
  margin-top: 3px;
}

.filter {
  padding: 7px 8px 0;
}
.routing {
  display: flex;
  gap: 11px;
  height: 19px;
  padding-left: 15px;
  border-bottom: 1px solid #0f0f11;
  background: #2e2e2f;
  color: #69696c;
  font-size: 9px;
}
.routing .on {
  color: #4fc3cf;
  font-weight: 600;
}
.curve {
  width: 100%;
  height: 79px;
}
.types {
  display: grid;
  grid-template-columns: 1fr 1fr;
  min-height: 38px;
  border-top: 1px solid #0f0f11;
  background: #2e2e2f;
}
.types > div {
  padding: 3px 7px 0 6px;
}
.types > .rose {
  border-left: 1px solid #1c1c1e;
}
.type {
  display: grid;
  grid-template-columns: 17px 17px 18px 18px 1fr;
  height: 13px;
  align-items: center;
  color: #67676a;
  font-size: 9px;
}
.type .on {
  height: 11px;
  background: #28585d;
  color: #56c8d2;
  font-weight: 600;
}
.rose .type .on {
  background: #6b4a5e;
  color: #dc9dbd;
}
.poles {
  justify-self: end;
  width: 20px;
  height: 12px;
  border: 1px solid #242427;
  color: #4fc3cf;
}
.poles .steps {
  width: 5px;
  margin-right: 1px;
}
.poles select {
  padding-right: 6px;
}
.rose .poles {
  color: #d48db0;
}
.route {
  display: grid;
  grid-template-columns: repeat(4, 1fr);
  gap: 2px;
  margin-top: 6px;
}
.route button {
  height: 11px;
  background: #244649;
  color: #4fb9c3;
  font-size: 8px;
}
.filters {
  display: grid;
  grid-template-columns: 61fr 57fr 57fr 61fr;
  padding-top: 6px;
}
.filters > .cell:first-child,
.filters > .cell:last-child {
  padding-top: 3px;
}
.filters .cell > .mods {
  gap: 4px;
  margin-top: 4px;
}
.filters .reso > .mods {
  gap: 6px;
  margin-top: 3px;
  margin-bottom: 3px;
}
.inline {
  display: flex;
  justify-content: space-between;
  box-sizing: border-box;
  width: 43px;
  height: 14px;
  margin-top: 3px;
  padding: 0 1px;
  border: 1px solid #1d1d24;
  font-size: 9px;
}
.inline input {
  width: 12px;
  text-align: right;
}
.depths {
  display: grid;
  grid-template-columns: 35fr 19fr 27fr 14fr 42fr 14fr 27fr 19fr 35fr;
  justify-items: center;
  align-items: start;
  padding-top: 8px;
}
.depths > .mods {
  padding-top: 1px;
}
.depths > .mods:nth-child(2),
.depths > .mods:nth-child(8) {
  padding-top: 12px;
  gap: 6px;
}
.slots {
  display: grid;
  gap: 1px;
  width: 25px;
}
.slots button {
  height: 12px;
  border: 1px solid #26373d;
  background: #2b2c34;
  color: #54565e;
  font-size: 8px;
}
.slots .on {
  border-color: #45c3d2;
  background: #45c3d2;
  color: #182a30;
}
.slots.rose button {
  border-color: #43333f;
}
.slots.rose .on {
  border-color: #db94c0;
  background: #db94c0;
  color: #33202c;
}

.pager {
  display: flex;
  gap: 14px;
  justify-self: end;
  margin-right: -1px;
  color: #7c7b84;
  font-size: 11px;
}
.pager .on,
.tabs .on {
  color: #4fc3cf;
  font-weight: 700;
}
.pager button:last-child {
  margin-left: -2px;
}
.envs {
  display: grid;
  gap: 9px;
  padding: 3px 10px 8px 11px;
}
.env-screen {
  display: grid;
  height: 53px;
}
.env-screen svg {
  grid-area: 1 / 1;
  width: 100%;
  height: 53px;
}
.env-screen span {
  grid-area: 1 / 1;
  justify-self: end;
  padding: 6px 6px 0 0;
  color: #419ea8;
}
.adsr {
  display: flex;
  margin-left: -6px;
  padding-top: 3px;
}
.stage {
  display: flex;
  flex: 1;
  gap: 3px;
}
.stage .mods {
  gap: 7px;
  padding-top: 11px;
}
.env-values {
  display: grid;
  align-content: start;
  gap: 1px;
  margin-left: 4px;
  padding-top: 3px;
}
.env-values .inline {
  width: 37px;
  margin: 0;
  background: linear-gradient(90deg, #2b4d55 var(--to), #2b2b34 var(--to));
}
.env-values .inline input {
  width: 14px;
}
.tabs {
  display: flex;
  gap: 16px;
  color: #73727a;
  font-size: 11px;
}
.master {
  display: grid;
  grid-template-columns: 68fr 68fr 59fr 40fr;
  gap: 7px;
  padding: 5px 14px 0 9px;
}
.lcd {
  display: grid;
  grid-template-columns: 1fr 1fr;
  box-sizing: border-box;
  height: 43px;
  margin-top: 1px;
  padding: 4px 4px 0;
  border: 1px solid #16181c;
  background: #1b2a2f;
  text-align: center;
  font-size: 9px;
}
.lcd dt {
  color: #3e8c94;
}
.lcd dd {
  margin-top: 6px;
  color: #4fc3cf;
  font-size: 10px;
}
.switches {
  display: grid;
  align-content: start;
  gap: 6px;
  padding-top: 1px;
}
.switches button {
  height: 18px;
  border: 1px solid #121215;
  background: #292a2c;
  color: #98989c;
  font-size: 11px;
}

/* modulation sources */
.sources {
  display: flex;
  gap: 9px;
  padding: 4px 6px 4px 7px;
}
.group {
  display: flex;
  gap: 3px;
  min-width: 0;
}
.source {
  display: flex;
  flex: 1 1 0;
  align-items: center;
  gap: 3px;
  min-width: 0;
  padding-bottom: 2px;
  border-bottom: 1px solid;
  border-color: color-mix(in srgb, currentColor 60%, #1c1c1e);
}
.source > button:first-child {
  flex: 1 1 0;
  height: 18px;
  border: 1px solid color-mix(in srgb, currentColor 60%, #1c1c1e);
}
.source > .dim {
  color: color-mix(in srgb, currentColor 45%, #1c1c1e);
}
.midi {
  flex: 375 1 0;
  color: #2580b2;
}
.midi button {
  overflow: hidden;
}
.lfo {
  flex: 156 1 0;
  color: #3b9672;
  font-size: 11px;
}
.seq {
  flex: 243 1 0;
  color: #d9d843;
}
.env {
  flex: 186 1 0;
  color: #c06a8b;
  font-size: 12px;
}

/* lower area */
.lower {
  display: grid;
  grid-template-columns: 73px minmax(0, 1fr);
  gap: 12px;
  margin: 0 2px;
  padding: 7px 6px 8px 0;
  border: 1px solid #4a4a4b;
  border-left: 0;
  background: #353536;
}
.pages {
  display: grid;
  align-content: start;
  align-self: start;
  gap: 3px;
  margin-top: 18px;
  padding: 9px 3px 7px;
  border: 1px solid #4a4a4b;
  border-left: 0;
  background: #1d1e1e;
  color: #737376;
}
.pages button {
  height: 23px;
}
.pages .on {
  background: #243e42;
  color: #4fd0dc;
  font-weight: 600;
}
.pages .lock {
  justify-self: center;
  margin-top: 4px;
  color: #505052;
}
.rack-wrap {
  display: flex;
  align-items: flex-start;
  min-width: 0;
}
.rack {
  flex: 1;
  min-width: 0;
  padding: 5px 2px 0 0;
  background: #1c1c1e;
}
.modules {
  display: flex;
  height: 157px;
  overflow: hidden;
}
.insert {
  flex: 0 0 17px;
  color: #77777b !important;
  font-size: 14px !important;
  font-weight: 600 !important;
}
.insert.first {
  flex-basis: 20px;
}
.insert.wide {
  flex-basis: 18px;
}
.module {
  display: grid;
  grid-template-columns: 17px minmax(0, 1fr);
  background: #35343f;
}
.svf {
  flex: 0 0 237px;
}
.chorus {
  flex: 0 0 114px;
}
.delay {
  flex: 0 0 158px;
}
.reverb {
  flex: 0 0 201px;
}
.scope {
  flex: 0 0 103px;
}
.rail {
  display: flex;
  flex-direction: column;
  align-items: center;
  padding: 4px 0 7px;
  background: #25252c;
  color: #d4d4d8;
}
.rail i {
  margin-top: 8px;
  border: 7px solid transparent;
  border-left: 8px solid #131316;
  border-right: 0;
}
.rail h3 {
  display: flex;
  flex: 1;
  align-items: center;
  justify-content: center;
  padding-top: 6px;
  writing-mode: vertical-rl;
  transform: rotate(180deg);
  font-size: 10px;
  color: #b9b9bf;
}
.group-box {
  background: #2b2b34;
}
.param {
  display: grid;
}
.param label,
.tone-param label {
  display: grid;
}
.param label > span,
.tone-param label > span {
  display: flex;
  justify-content: space-between;
  align-items: center;
  line-height: 13px;
  font-size: 9px;
  white-space: nowrap;
}
.lower .val {
  color: #4fc3cf;
  font-size: 9px;
}
.param .mods {
  justify-content: center;
  gap: 5px;
  margin-top: 2px;
}
.svf-body {
  display: grid;
  grid-template-columns: 47px minmax(0, 1fr);
  gap: 2px;
  padding: 4px 3px 4px 4px;
}
.column {
  display: grid;
  gap: 5px;
  align-content: start;
  padding: 1px 4px 0 3px;
}
.svf-right {
  display: grid;
  grid-template-rows: 105px 1fr;
  gap: 4px;
}
.plot {
  width: 100%;
  height: 105px;
  background: #141616;
}
.svf-controls {
  display: grid;
  grid-template-columns: 30px minmax(0, 1fr);
  gap: 5px;
  padding-left: 3px;
}
.modes {
  display: grid;
  align-content: start;
  gap: 2px;
  padding-top: 3px;
}
.modes button {
  height: 10px;
  border: 1px solid #16171a;
  background: #27282b;
  font-size: 9px;
  line-height: 8px;
}
.modes .on {
  background: #3fa9b5;
  color: #16363b;
}
.tone {
  display: grid;
  grid-template-columns: 1fr 1fr;
  gap: 8px;
  padding: 2px 5px 0;
}
.tone-param {
  display: flex;
  gap: 2px;
}
.tone-param label {
  flex: 1;
  align-content: start;
  min-width: 0;
}
.tone-param .mods {
  gap: 3px;
  padding-top: 5px;
}
.fx-body {
  display: grid;
  grid-template-rows: auto 1fr;
  gap: 4px;
  padding: 3px 3px 4px 5px;
}
.chorus .fx-body {
  padding: 3px 2px 4px 4px;
}
.chorus-screen {
  display: grid;
  height: 42px;
  align-content: center;
  padding: 0 5px;
  background: #1d1e20;
}
.chorus-screen b {
  color: #45aab5;
  font-size: 11px;
  font-weight: 500;
  line-height: 18px;
}
.chorus-screen span {
  justify-self: end;
  font-size: 14px;
  line-height: 22px;
  color: #d6d6d8;
}
.params {
  display: grid;
  align-content: start;
}
.two {
  grid-template-columns: 1fr 1fr;
  gap: 4px 2px;
  padding: 4px 5px 0 4px;
}
.three {
  grid-template-columns: repeat(3, 1fr);
  gap: 3px;
  padding: 5px 4px 0;
}
.four {
  grid-template-columns: repeat(4, 1fr);
  gap: 4px 2px;
  padding: 4px 3px 0 5px;
}
.compact label > span {
  font-size: 8px;
  line-height: 12px;
}
.compact .val {
  height: 15px;
}
.compact .mods {
  gap: 6px;
  margin-top: 1px;
}
.dw {
  background: #17171a;
}
.delay-screen {
  height: 35px;
  padding: 1px 8px 0;
  background: #1d1e20;
  color: #d6d6d8;
}
.delay-screen b {
  color: #45aab5;
  font-size: 9px;
  font-weight: 500;
}
.delay-screen div {
  display: flex;
  justify-content: space-between;
  padding: 3px 8px 0 9px;
  font-size: 9px;
  white-space: nowrap;
}
.delay-screen strong {
  font-size: 11px;
  font-weight: 500;
}
.dot,
.toggle {
  height: 14px !important;
  background: #232327 !important;
  font-size: 9px !important;
}
.dot .steps {
  width: 5px;
  margin-right: 2px;
}
.dot select {
  padding-right: 7px;
}
.toggle {
  border: 1px solid #17171b !important;
  color: #85858a !important;
}
.decay {
  display: grid;
  align-content: start;
  height: 42px;
}
.decay-top {
  display: flex;
  justify-content: space-between;
  align-items: center;
  height: 14px;
  color: #e0e0e3;
  font-weight: 600;
}
.decay-top .mods {
  gap: 6px;
  margin: 0 5px 0 0;
}
.decay-track {
  display: flex;
  align-items: center;
  height: 22px;
  margin-top: 4px;
  padding: 0 6px;
  background: #2b2b33;
}
.decay-track input {
  appearance: none;
  width: 100%;
  height: 5px;
  background: linear-gradient(90deg, #3d98a2 50%, #17181b 50%);
}
.decay-track input::-webkit-slider-thumb {
  appearance: none;
  width: 9px;
  height: 9px;
  border-radius: 50%;
  background: #4fcdd9;
}
.reverb .fx-body {
  padding: 3px 3px 4px;
}
.reverb .decay {
  padding: 2px 26px 0 27px;
}
.scope-body {
  display: grid;
  grid-template-rows: 105px 1fr;
  gap: 4px;
  padding: 3px 3px 4px 5px;
}
.zoom {
  display: grid;
  align-content: start;
  padding: 3px 8px 0;
}
.zoom span {
  font-size: 9px;
  line-height: 14px;
}
.zoom .val {
  width: 50px;
}
.scroll {
  padding: 5px 2px 1px 4px;
}
.scroll i {
  display: block;
  width: 90%;
  height: 5px;
  background: #cfcfcf;
}
.strip {
  display: flex;
  flex-direction: column;
  align-items: center;
  gap: 17px;
  width: 18px;
  height: 74px;
  padding-top: 9px;
  background: #1c1c1e;
}
.strip .lock {
  color: #4c4c50;
}
.status {
  display: grid;
  grid-template-columns: 752fr 110fr 126fr 12fr;
  align-items: center;
  height: 21px;
  margin-top: 1px;
  background: #2e2e2e;
}
.status .lic {
  color: #77777a;
}
.status strong {
  font-weight: 500;
  font-size: 11px;
}
.status .info {
  width: 13px;
  height: 13px;
  margin-left: 3px;
  border-radius: 50%;
  background: #b4b4b6;
  color: #2a2a2a;
  font-family: 'Liberation Serif', serif;
  font-size: 12px;
  font-style: italic;
  font-weight: 700;
}
.grip {
  align-self: end;
}
</style>
